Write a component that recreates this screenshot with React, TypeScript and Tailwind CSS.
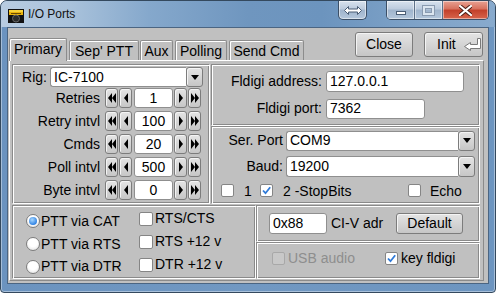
import React from 'react';

type P = { className?: string; children?: React.ReactNode };

const Btn = ({ className = '', children }: P) => (
  <div
    className={`flex items-center justify-center rounded-[3px] border border-[#7c7c7c] bg-[linear-gradient(#e4e4e4,#c6c6c6)] shadow-[inset_1px_1px_0_#f4f4f4] ${className}`}
  >
    {children}
  </div>
);

const Field = ({ className = '', children }: P) => (
  <div className={`flex items-center px-[3px] bg-white border border-[#8f8f8f] rounded-[3px] whitespace-nowrap ${className}`}>
    {children}
  </div>
);

const Group = ({ className = '', children }: P) => (
  <div
    className={`border border-[#8a8a8a] border-r-white border-b-white shadow-[inset_1px_1px_0_#fff,inset_-1px_-1px_0_#8a8a8a] ${className}`}
  >
    {children}
  </div>
);

const Down = () => (
  <svg width="8" height="5" viewBox="0 0 8 5">
    <path d="M0 0H8L4 5Z" fill="#000" />
  </svg>
);

const Choice = ({ className = '', value }: { className?: string; value: string }) => (
  <div className={`flex ${className}`}>
    <div className="flex-1 flex items-center pl-[3px] bg-white border border-r-0 border-[#8f8f8f] rounded-l-[3px]">{value}</div>
    <Btn className="w-[17px] h-full">
      <Down />
    </Btn>
  </div>
);

const Arrow = ({ d }: { d: 'll' | 'l' | 'r' | 'rr' }) => (
  <svg width="8" height="10" viewBox="0 0 8 10">
    {d === 'll' && <path d="M4 0L0 5L4 10ZM8 0L4 5L8 10Z" fill="#000" />}
    {d === 'l' && <path d="M6 0L2 5L6 10Z" fill="#000" />}
    {d === 'r' && <path d="M2 0L6 5L2 10Z" fill="#000" />}
    {d === 'rr' && <path d="M0 0L4 5L0 10ZM4 0L8 5L4 10Z" fill="#000" />}
  </svg>
);

const Spin = ({ label, value }: { label: string; value: string }) => (
  <div className="flex items-center h-[20px]">
    <div className="w-[87px] text-right whitespace-nowrap">{label}</div>
    <Btn className="ml-[5px] w-[13px] h-[20px]"><Arrow d="ll" /></Btn>
    <Btn className="ml-[1px] w-[13px] h-[20px]"><Arrow d="l" /></Btn>
    <Field className="ml-[2px] w-[39px] h-[20px] justify-center">{value}</Field>
    <Btn className="ml-[1px] w-[13px] h-[20px]"><Arrow d="r" /></Btn>
    <Btn className="ml-[1px] w-[13px] h-[20px]"><Arrow d="rr" /></Btn>
  </div>
);

const Check = ({ on, disabled }: { on?: boolean; disabled?: boolean }) => (
  <div
    className={`w-[13px] h-[13px] shrink-0 rounded-[2px] border flex items-center justify-center ${
      disabled ? 'border-[#a8a8a8] bg-[#c8c8c8]' : 'border-[#858585] bg-white'
    }`}
  >
    {on && (
      <svg width="11" height="11" viewBox="0 0 11 11">
        <path d="M2 5.5L4.5 8.2L9.2 2.2" fill="none" stroke="#2f7ad8" strokeWidth="1.8" />
      </svg>
    )}
  </div>
);

const Radio = ({ on }: { on?: boolean }) => (
  <div className="w-[14px] h-[14px] shrink-0 rounded-full border border-[#7d7d7d] bg-[radial-gradient(circle_at_50%_35%,#fff_45%,#dcdcdc)] flex items-center justify-center">
    {on && <div className="w-[8px] h-[8px] rounded-full bg-[radial-gradient(circle_at_40%_35%,#a8d8ff,#2a7ee2_75%)]" />}
  </div>
);

const Tab = ({ label, className = '', active }: { label: string; className?: string; active?: boolean }) => (
  <div
    className={`flex items-center justify-center whitespace-nowrap bg-[#c0c0c0] border border-b-0 border-[#8c8c8c] rounded-t-[2px] shadow-[inset_1px_1px_0_#fff] ${
      active ? 'relative z-[1] h-[23px] -mb-px pb-[1px]' : 'h-[20px] pt-[1px]'
    } ${className}`}
  >
    {label}
  </div>
);

const CapGlass = 'bg-[linear-gradient(#d7e2ee_0%,#bccbdd_45%,#9fb4cc_50%,#b4c7dc_100%)]';

const App = () => (
  <div className="w-[496px] h-[293px] bg-white overflow-hidden font-['Liberation_Sans',Arial,sans-serif] text-[14px] text-black">
    <div className="w-full h-full flex flex-col rounded-t-[7px] rounded-b-[4px] border border-[#34495e] bg-[linear-gradient(90deg,#6b93bf,#7198c2_50%,#6d95c0)] shadow-[inset_0_0_0_1px_rgba(255,255,255,0.4)]">
      {/* title bar */}
      <div className="h-[26px] shrink-0 flex items-start rounded-t-[6px] bg-[linear-gradient(90deg,#b8cce1_0%,#a9c2db_14%,#85a8cc_30%,#6f96bf_50%,#6c94be_65%,#7fa3c8_85%,#88aacd_100%)]">
        <svg className="ml-[7px] mt-[8px]" width="16" height="14" viewBox="0 0 16 14">
          <rect width="16" height="14" fill="#111" />
          <rect x="1" y="1" width="14" height="5" fill="#e9b20a" />
          <rect x="1" y="1" width="14" height="2" fill="#f7d23a" />
          <rect x="3" y="4" width="10" height="1" fill="#6b4a00" />
          <circle cx="8" cy="9.5" r="3.5" fill="#2a2a2a" stroke="#666" strokeWidth="1" />
        </svg>
        <div className="ml-[4px] mt-[6px] text-[12px] leading-[14px] text-[#111]">I/O Ports</div>
        <div className="ml-auto flex items-start">
          <div className={`w-[29px] h-[19px] flex items-center justify-center rounded-b-[5px] border border-t-0 border-[#3c4f66] shadow-[inset_0_0_0_1px_rgba(255,255,255,0.5)] ${CapGlass}`}>
            <svg width="18" height="9" viewBox="0 0 18 9">
              <path d="M0.5 4.5L4.5 0.5V3H13.5V0.5L17.5 4.5L13.5 8.5V6H4.5V8.5Z" fill="#fff" stroke="#4a5d75" strokeWidth="1" />
            </svg>
          </div>
          <div className="ml-[19px] mr-[6px] flex h-[19px] rounded-b-[5px] border border-t-0 border-[#3c4f66] overflow-hidden">
            <div className={`w-[28px] flex items-center justify-center border-r border-[#5d7189] shadow-[inset_0_0_0_1px_rgba(255,255,255,0.5)] ${CapGlass}`}>
              <div className="w-[10px] h-[4px] mt-[5px] bg-white border border-[#4a5d75]" />
            </div>
            <div className={`w-[28px] flex items-center justify-center border-r border-[#5d7189] shadow-[inset_0_0_0_1px_rgba(255,255,255,0.5)] ${CapGlass}`}>
              <div className="w-[11px] h-[9px] border-2 border-[#dce6f0] shadow-[0_0_0_1px_#8a9bb0,inset_0_0_0_1px_#8a9bb0]" />
            </div>
            <div className="w-[45px] flex items-center justify-center bg-[linear-gradient(#e8a293_0%,#d7705c_45%,#c2402a_50%,#d8654c_100%)] shadow-[inset_0_0_0_1px_rgba(255,255,255,0.45)]">
              <svg width="13" height="11" viewBox="0 0 13 11">
                <path d="M1 1L12 10M12 1L1 10" stroke="#4a1c14" strokeWidth="4" strokeLinecap="round" />
                <path d="M1 1L12 10M12 1L1 10" stroke="#fff" strokeWidth="2.2" strokeLinecap="round" />
              </svg>
            </div>
          </div>
        </div>
      </div>

      {/* client area */}
      <div className="ml-[6px] w-[482px] h-[257px] shrink-0 border border-[#4b6582] bg-[#c0c0c0]">
        <div className="h-[32px] flex">
          <div className="ml-[1px] flex items-end">
            <Tab label="Primary" active className="w-[58px]" />
            <Tab label="Sep' PTT" className="ml-[2px] w-[70px]" />
            <Tab label="Aux" className="ml-[1px] w-[33px]" />
            <Tab label="Polling" className="ml-[2px] w-[52px]" />
            <Tab label="Send Cmd" className="ml-[2px] w-[75px]" />
          </div>
          <div className="ml-auto mr-[5px] mt-[4px] flex items-start">
            <Btn className="w-[58px] h-[25px]">Close</Btn>
            <Btn className="ml-[11px] w-[59px] h-[25px] justify-start pl-[12px]">
              <span>Init</span>
              <svg className="ml-[8px]" width="17" height="13" viewBox="0 0 17 13">
                <path d="M13.5 0.5H16.5V10.5H6.5V12.5L0.5 8.5L6.5 4.5V6.5H13.5Z" fill="#fff" stroke="#7a7a7a" strokeWidth="1" />
              </svg>
            </Btn>
          </div>
        </div>

        {/* tab panel */}
        <div className="ml-[1px] w-[475px] h-[221px] border border-white border-r-[#8a8a8a] border-b-[#8a8a8a] pl-[2px] pt-[3px] flex flex-col">
          <div className="flex h-[140px]">
            <Group className="w-[198px] h-[140px] pt-[2px]">
              <div className="flex items-center h-[20px]">
                <div className="w-[34px] text-right">Rig:</div>
                <Choice className="ml-[3px] w-[153px] h-[20px]" value="IC-7100" />
              </div>
              <div className="mt-[1px] flex flex-col gap-[3px]">
                <Spin label="Retries" value="1" />
                <Spin label="Retry intvl" value="100" />
                <Spin label="Cmds" value="20" />
                <Spin label="Poll intvl" value="500" />
                <Spin label="Byte intvl" value="0" />
              </div>
            </Group>
            <div className="ml-[1px] w-[269px] flex flex-col">
              <Group className="h-[62px] pt-[6px]">
                <div className="flex items-center">
                  <div className="w-[110px] text-right whitespace-nowrap">Fldigi address:</div>
                  <Field className="ml-[4px] w-[138px] h-[21px]">127.0.0.1</Field>
                </div>
                <div className="mt-[6px] flex items-center">
                  <div className="w-[110px] text-right whitespace-nowrap">Fldigi port:</div>
                  <Field className="ml-[4px] w-[99px] h-[20px]">7362</Field>
                </div>
              </Group>
              <Group className="h-[78px] pt-[3px]">
                <div className="flex items-center">
                  <div className="w-[71px] text-right whitespace-nowrap">Ser. Port</div>
                  <Choice className="ml-[3px] w-[189px] h-[20px]" value="COM9" />
                </div>
                <div className="mt-[5px] flex items-center">
                  <div className="w-[71px] text-right">Baud:</div>
                  <Choice className="ml-[3px] w-[189px] h-[21px]" value="19200" />
                </div>
                <div className="mt-[7px] h-[13px] flex items-center">
                  <div className="ml-[9px] w-[39px] flex items-center">
                    <Check />
                    <span className="ml-[10px] leading-none">1</span>
                  </div>
                  <div className="w-[148px] flex items-center">
                    <Check on />
                    <span className="ml-[10px] leading-none whitespace-nowrap">2 -StopBits</span>
                  </div>
                  <div className="flex items-center">
                    <Check />
                    <span className="ml-[9px] leading-none">Echo</span>
                  </div>
                </div>
              </Group>
            </div>
          </div>

          <div className="mt-[1px] flex h-[74px]">
            <Group className="w-[244px] h-[74px] flex">
              <div className="ml-[13px] w-[113px] pt-[4px] flex flex-col">
                {['PTT via CAT', 'PTT via RTS', 'PTT via DTR'].map((t, i) => (
                  <div key={t} className="h-[23px] flex items-center whitespace-nowrap">
                    <Radio on={i === 0} />
                    <span className="ml-[1px]">{t}</span>
                  </div>
                ))}
              </div>
              <div className="pt-[1px] flex flex-col">
                {['RTS/CTS', 'RTS +12 v', 'DTR +12 v'].map((t) => (
                  <div key={t} className="h-[23px] flex items-center whitespace-nowrap">
                    <div className="w-[14px] h-[14px] shrink-0 rounded-[2px] border border-[#858585] bg-white" />
                    <span className="ml-[2px]">{t}</span>
                  </div>
                ))}
              </div>
            </Group>
            <div className="w-[224px] flex flex-col">
              <Group className="h-[37px] pt-[7px] flex items-start">
                <Field className="ml-[12px] w-[58px] h-[21px]">0x88</Field>
                <div className="ml-[4px] w-[65px] h-[21px] flex items-center whitespace-nowrap">CI-V adr</div>
                <Btn className="w-[67px] h-[21px]">Default</Btn>
              </Group>
              <Group className="h-[37px] pt-[9px] flex items-start">
                <div className="ml-[15px] w-[113px] h-[13px] flex items-center">
                  <Check disabled />
                  <span className="ml-[3px] text-[#8e8e8e] whitespace-nowrap">USB audio</span>
                </div>
                <div className="h-[13px] flex items-center">
                  <Check on />
                  <span className="ml-[3px] whitespace-nowrap">key fldigi</span>
                </div>
              </Group>
            </div>
          </div>
        </div>
      </div>
    </div>
  </div>
);

export default App;
